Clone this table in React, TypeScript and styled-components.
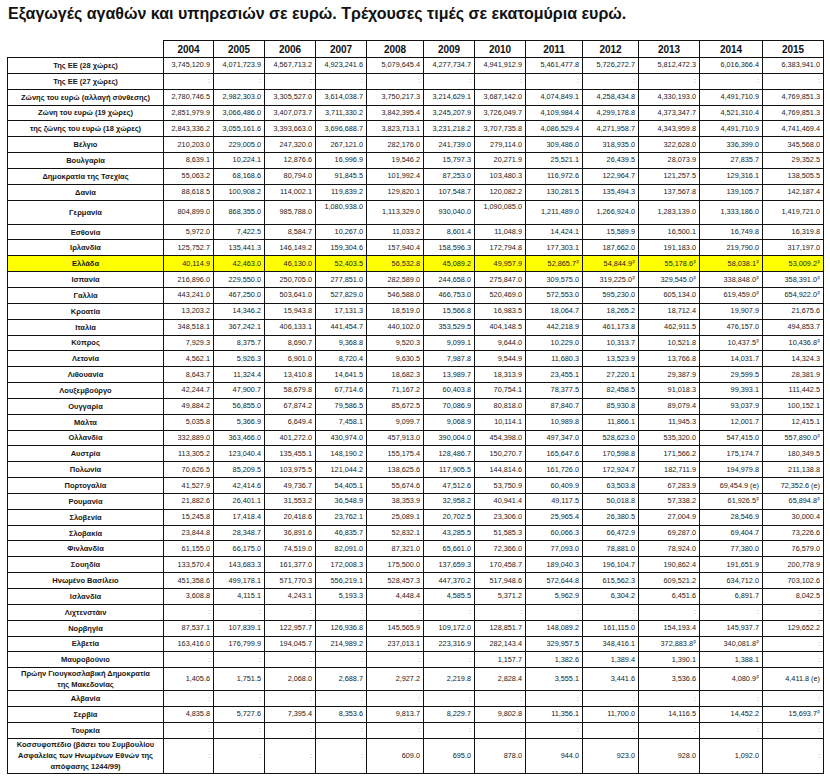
import styled, { createGlobalStyle } from "styled-components";

type Row = {
  label: string[];
  values: string[];
  h?: number;
  highlight?: boolean;
  topCols?: number[];
};

const years = [2004, 2005, 2006, 2007, 2008, 2009, 2010, 2011, 2012, 2013, 2014, 2015];
const colWidths = [156, 50, 51, 51, 51, 57, 51, 51, 57, 56, 61, 63, 61];

const dots = (n: number) => Array.from({ length: n }, () => ":");

const rows: Row[] = [
  { label: ["Της ΕΕ (28 χώρες)"], values: ["3,745,120.9", "4,071,723.9", "4,567,713.2", "4,923,241.6", "5,079,645.4", "4,277,734.7", "4,941,912.9", "5,461,477.8", "5,726,272.7", "5,812,472.3", "6,016,366.4", "6,383,941.0"] },
  { label: ["Της ΕΕ (27 χώρες)"], values: dots(12) },
  { label: ["Ζώνης του ευρώ (αλλαγή σύνθεσης)"], values: ["2,780,746.5", "2,982,303.0", "3,305,527.0", "3,614,038.7", "3,750,217.3", "3,214,629.1", "3,687,142.0", "4,074,849.1", "4,258,434.8", "4,330,193.0", "4,491,710.9", "4,769,851.3"] },
  { label: ["Ζώνη του ευρώ (19 χώρες)"], values: ["2,851,979.9", "3,066,486.0", "3,407,073.7", "3,711,330.2", "3,842,395.4", "3,245,207.9", "3,726,049.7", "4,109,984.4", "4,299,178.8", "4,373,347.7", "4,521,310.4", "4,769,851.3"] },
  { label: ["της ζώνης του ευρώ (18 χώρες)"], values: ["2,843,336.2", "3,055,161.6", "3,393,663.0", "3,696,688.7", "3,823,713.1", "3,231,218.2", "3,707,735.8", "4,086,529.4", "4,271,958.7", "4,343,959.8", "4,491,710.9", "4,741,469.4"] },
  { label: ["Βέλγιο"], values: ["210,203.0", "229,005.0", "247,320.0", "267,121.0", "282,176.0", "241,739.0", "279,114.0", "309,486.0", "318,935.0", "322,628.0", "336,399.0", "345,568.0"] },
  { label: ["Βουλγαρία"], values: ["8,639.1", "10,224.1", "12,876.6", "16,996.9", "19,546.2", "15,797.3", "20,271.9", "25,521.1", "26,439.5", "28,073.9", "27,835.7", "29,352.5"] },
  { label: ["Δημοκρατία της Τσεχίας"], values: ["55,063.2", "68,168.6", "80,794.0", "91,845.5", "101,992.4", "87,253.0", "103,480.3", "116,972.6", "122,964.7", "121,257.5", "129,316.1", "138,505.5"] },
  { label: ["Δανία"], values: ["88,618.5", "100,908.2", "114,002.1", "119,839.2", "129,820.1", "107,548.7", "120,082.2", "130,281.5", "135,494.3", "137,567.8", "139,105.7", "142,187.4"] },
  { label: ["Γερμανία"], h: 24, topCols: [3, 6], values: ["804,899.0", "868,355.0", "985,788.0", "1,080,938.0", "1,113,329.0", "930,040.0", "1,090,085.0", "1,211,489.0", "1,266,924.0", "1,283,139.0", "1,333,186.0", "1,419,721.0"] },
  { label: ["Εσθονία"], values: ["5,972.0", "7,422.5", "8,584.7", "10,267.0", "11,033.2", "8,601.4", "11,048.9", "14,424.1", "15,589.9", "16,500.1", "16,749.8", "16,319.8"] },
  { label: ["Ιρλανδία"], values: ["125,752.7", "135,441.3", "146,149.2", "159,304.6", "157,940.4", "158,596.3", "172,794.8", "177,303.1", "187,662.0", "191,183.0", "219,790.0", "317,197.0"] },
  { label: ["Ελλάδα"], highlight: true, values: ["40,114.9", "42,463.0", "46,130.0", "52,403.5", "56,532.8", "45,089.2", "49,957.9", "52,865.7^", "54,844.9^", "55,178.6^", "58,038.1^", "53,009.2^"] },
  { label: ["Ισπανία"], values: ["216,896.0", "229,550.0", "250,705.0", "277,851.0", "282,589.0", "244,658.0", "275,847.0", "309,575.0", "319,225.0^", "329,545.0^", "338,848.0^", "358,391.0^"] },
  { label: ["Γαλλία"], values: ["443,241.0", "467,250.0", "503,641.0", "527,829.0", "546,588.0", "466,753.0", "520,469.0", "572,553.0", "595,230.0", "605,134.0", "619,459.0^", "654,922.0^"] },
  { label: ["Κροατία"], values: ["13,203.2", "14,346.2", "15,943.8", "17,131.3", "18,519.0", "15,566.8", "16,983.5", "18,064.7", "18,265.2", "18,712.4", "19,907.9", "21,675.6"] },
  { label: ["Ιταλία"], values: ["348,518.1", "367,242.1", "406,133.1", "441,454.7", "440,102.0", "353,529.5", "404,148.5", "442,218.9", "461,173.8", "462,911.5", "476,157.0", "494,853.7"] },
  { label: ["Κύπρος"], values: ["7,929.3", "8,375.7", "8,690.7", "9,368.8", "9,520.3", "9,099.1", "9,644.0", "10,229.0", "10,313.7", "10,521.8", "10,437.5^", "10,436.8^"] },
  { label: ["Λετονία"], values: ["4,562.1", "5,926.3", "6,901.0", "8,720.4", "9,630.5", "7,987.8", "9,544.9", "11,680.3", "13,523.9", "13,766.8", "14,031.7", "14,324.3"] },
  { label: ["Λιθουανία"], values: ["8,643.7", "11,324.4", "13,410.8", "14,641.5", "18,682.3", "13,989.7", "18,313.9", "23,455.1", "27,220.1", "29,387.9", "29,599.5", "28,381.9"] },
  { label: ["Λουξεμβούργο"], values: ["42,244.7", "47,900.7", "58,679.8", "67,714.6", "71,167.2", "60,403.8", "70,754.1", "78,377.5", "82,458.5", "91,018.3", "99,393.1", "111,442.5"] },
  { label: ["Ουγγαρία"], values: ["49,884.2", "56,855.0", "67,874.2", "79,586.5", "85,672.5", "70,086.9", "80,818.0", "87,840.7", "85,930.8", "89,079.4", "93,037.9", "100,152.1"] },
  { label: ["Μάλτα"], values: ["5,035.8", "5,366.9", "6,649.4", "7,458.1", "9,099.7", "9,068.9", "10,114.1", "10,989.8", "11,866.1", "11,945.3", "12,001.7", "12,415.1"] },
  { label: ["Ολλανδία"], values: ["332,889.0", "363,466.0", "401,272.0", "430,974.0", "457,913.0", "390,004.0", "454,398.0", "497,347.0", "528,623.0", "535,320.0", "547,415.0", "557,890.0^"] },
  { label: ["Αυστρία"], values: ["113,305.2", "123,040.4", "135,455.1", "148,190.2", "155,175.4", "128,486.7", "150,270.7", "165,647.6", "170,598.8", "171,566.2", "175,174.7", "180,349.5"] },
  { label: ["Πολωνία"], values: ["70,626.5", "85,209.5", "103,975.5", "121,044.2", "138,625.6", "117,905.5", "144,814.6", "161,726.0", "172,924.7", "182,711.9", "194,979.8", "211,138.8"] },
  { label: ["Πορτογαλία"], values: ["41,527.9", "42,414.6", "49,736.7", "54,405.1", "55,674.6", "47,512.6", "53,750.9", "60,409.9", "63,503.8", "67,283.9", "69,454.9 (e)", "72,352.6 (e)"] },
  { label: ["Ρουμανία"], values: ["21,882.6", "26,401.1", "31,553.2", "36,548.9", "38,353.9", "32,958.2", "40,941.4", "49,117.5", "50,018.8", "57,338.2", "61,926.5^", "65,894.8^"] },
  { label: ["Σλοβενία"], values: ["15,245.8", "17,418.4", "20,418.6", "23,762.1", "25,089.1", "20,702.5", "23,306.0", "25,965.4", "26,380.5", "27,004.9", "28,546.9", "30,000.4"] },
  { label: ["Σλοβακία"], values: ["23,844.8", "28,348.7", "36,891.6", "46,835.7", "52,832.1", "43,285.5", "51,585.3", "60,066.3", "66,472.9", "69,287.0", "69,404.7", "73,226.6"] },
  { label: ["Φινλανδία"], values: ["61,155.0", "66,175.0", "74,519.0", "82,091.0", "87,321.0", "65,661.0", "72,366.0", "77,093.0", "78,881.0", "78,924.0", "77,380.0", "76,579.0"] },
  { label: ["Σουηδία"], values: ["133,570.4", "143,683.3", "161,377.0", "172,008.3", "175,500.0", "137,659.3", "170,458.7", "189,040.3", "196,104.7", "190,862.4", "191,651.9", "200,778.9"] },
  { label: ["Ηνωμένο Βασίλειο"], values: ["451,358.6", "499,178.1", "571,770.3", "556,219.1", "528,457.3", "447,370.2", "517,948.6", "572,644.8", "615,562.3", "609,521.2", "634,712.0", "703,102.6"] },
  { label: ["Ισλανδία"], values: ["3,608.8", "4,115.1", "4,243.1", "5,193.3", "4,448.4", "4,585.5", "5,371.2", "5,962.9", "6,304.2", "6,451.6", "6,891.7", "8,042.5"] },
  { label: ["Λιχτενστάιν"], values: dots(12) },
  { label: ["Νορβηγία"], values: ["87,537.1", "107,839.1", "122,957.7", "126,936.8", "145,565.9", "109,172.0", "128,851.7", "148,089.2", "161,115.0", "154,193.4", "145,937.7", "129,652.2"] },
  { label: ["Ελβετία"], values: ["163,416.0", "176,799.9", "194,045.7", "214,989.2", "237,013.1", "223,316.9", "282,143.4", "329,957.5", "348,416.1", "372,883.8^", "340,081.8^", ":"] },
  { label: ["Μαυροβούνιο"], values: [...dots(6), "1,157.7", "1,382.6", "1,389.4", "1,390.1", "1,388.1", ":"] },
  { label: ["Πρώην Γιουγκοσλαβική Δημοκρατία", "της Μακεδονίας"], h: 23, values: ["1,405.6", "1,751.5", "2,068.0", "2,688.7", "2,927.2", "2,219.8", "2,828.4", "3,555.1", "3,441.6", "3,536.6", "4,080.9^", "4,411.8 (e)"] },
  { label: ["Αλβανία"], values: dots(12) },
  { label: ["Σερβία"], values: ["4,835.8", "5,727.6", "7,395.4", "8,353.6", "9,813.7", "8,229.7", "9,802.8", "11,356.1", "11,700.0", "14,116.5", "14,452.2", "15,693.7^"] },
  { label: ["Τουρκία"], values: dots(12) },
  { label: ["Κοσσυφοπέδιο (βάσει του Συμβουλίου", "Ασφαλείας των Ηνωμένων Εθνών της", "απόφασης 1244/99)"], h: 35, values: [...dots(4), "609.0", "695.0", "878.0", "944.0", "923.0", "928.0", "1,092.0", ":"] },
];

const GlobalStyle = createGlobalStyle`
  * { box-sizing: border-box; }
  body {
    margin: 0;
    background: #fff;
    font-family: "Liberation Sans", Arial, sans-serif;
    color: #111;
  }
`;

const SPage = styled.div`
  padding: 5px 7px 0 7px;
`;

const STitle = styled.h1`
  margin: 0 0 17px 1px;
  font-size: 16px;
  line-height: 18px;
  font-weight: 700;
  color: #111;
`;

const STable = styled.table`
  border-collapse: collapse;
  table-layout: fixed;
  width: 816px;
`;

const SCol = styled.col<{ $w: number }>`
  width: ${(p) => p.$w}px;
`;

const SRow = styled.tr<{ $h: number; $highlight?: boolean }>`
  height: ${(p) => p.$h}px;
  background: ${(p) => (p.$highlight ? "#ffff00" : "transparent")};
`;

const SCorner = styled.th`
  border: none;
`;

const SYear = styled.th`
  border: 1px solid #111;
  height: 17px;
  padding: 0;
  font-size: 10px;
  font-weight: 700;
  text-align: center;
  color: #111;
`;

const SLabel = styled.td`
  border: 1px solid #111;
  padding: 0 2px;
  font-size: 7.5px;
  line-height: 11px;
  font-weight: 700;
  text-align: center;
  color: #161616;
`;

const SNum = styled.td<{ $top?: boolean }>`
  border: 1px solid #111;
  padding: ${(p) => (p.$top ? "1px" : "0")} 3px 0 0;
  vertical-align: ${(p) => (p.$top ? "top" : "middle")};
  font-size: 7.3px;
  color: #222;
  overflow: hidden;
`;

const SNumInner = styled.div`
  display: flex;
  justify-content: flex-end;
  white-space: nowrap;
  overflow: hidden;
  line-height: 10px;
`;

const SColon = styled.span`
  color: #9a9a9a;
`;

const SSup = styled.sup`
  font-size: 4.5px;
  line-height: 0;
  vertical-align: 3px;
  margin-left: 0.5px;
`;

function Value({ text }: { text: string }) {
  if (text === ":") return <SColon>:</SColon>;
  if (text.endsWith("^")) {
    return (
      <span>
        {text.slice(0, -1)}
        <SSup>p</SSup>
      </span>
    );
  }
  return <span>{text}</span>;
}

function App() {
  return (
    <SPage>
      <GlobalStyle />
      <STitle>Εξαγωγές αγαθών και υπηρεσιών σε ευρώ. Τρέχουσες τιμές σε εκατομύρια ευρώ.</STitle>
      <STable>
        <colgroup>
          {colWidths.map((w, i) => (
            <SCol key={i} $w={w} />
          ))}
        </colgroup>
        <thead>
          <tr>
            <SCorner />
            {years.map((y) => (
              <SYear key={y}>{y}</SYear>
            ))}
          </tr>
        </thead>
        <tbody>
          {rows.map((r) => (
            <SRow key={r.label.join(" ")} $h={r.h ?? 15.85} $highlight={r.highlight}>
              <SLabel>
                {r.label.map((line, i) => (
                  <span key={i}>
                    {i > 0 ? <br /> : null}
                    {line}
                  </span>
                ))}
              </SLabel>
              {r.values.map((v, i) => (
                <SNum key={i} $top={r.topCols?.includes(i)}>
                  <SNumInner>
                    <Value text={v} />
                  </SNumInner>
                </SNum>
              ))}
            </SRow>
          ))}
        </tbody>
      </STable>
    </SPage>
  );
}

export default App;
